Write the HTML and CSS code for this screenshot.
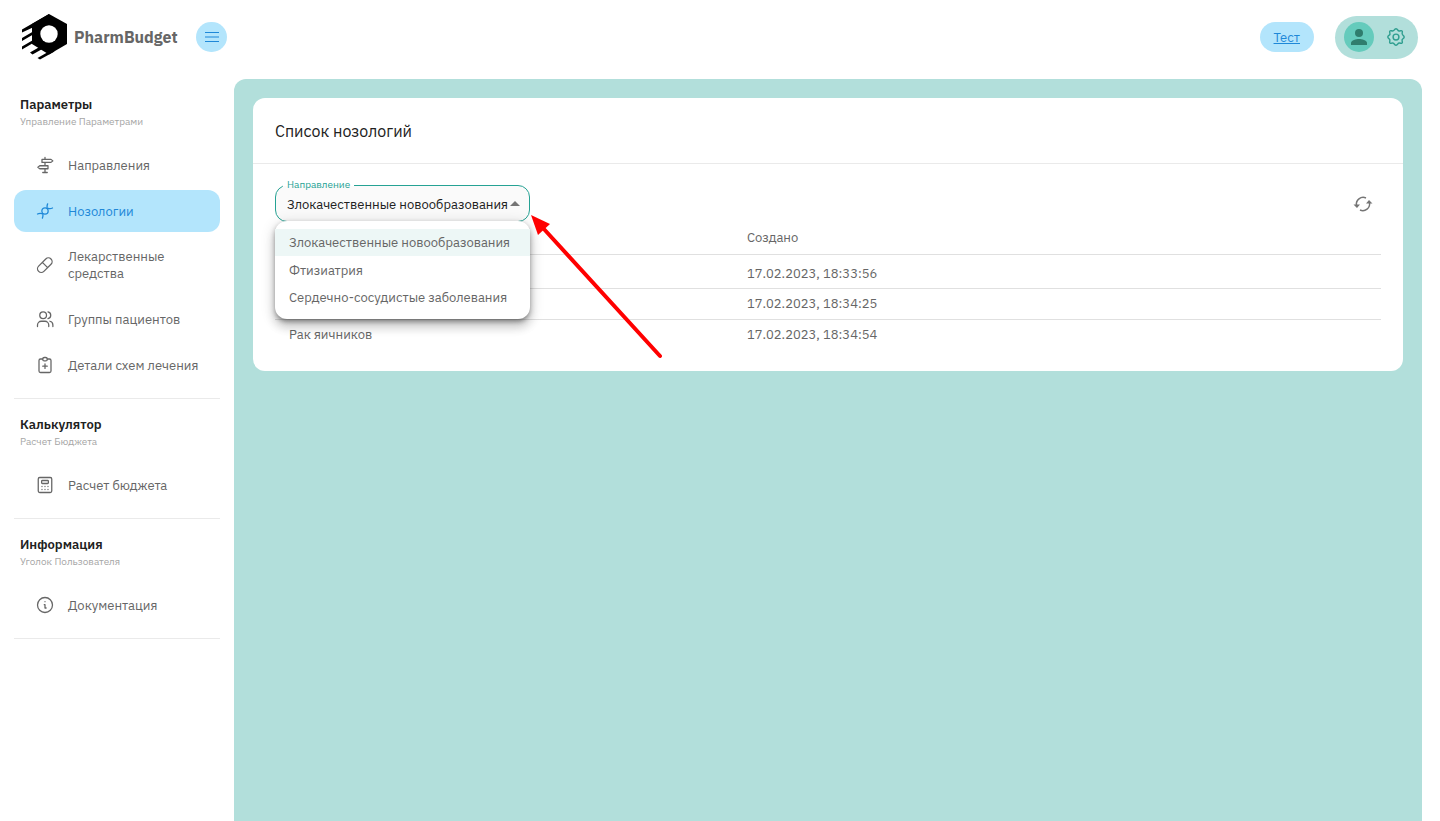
FILE: index.html
```html
<!DOCTYPE html>
<html lang="ru">
<head>
<meta charset="utf-8">
<title>PharmBudget</title>
<link rel="stylesheet" href="styles.css">
</head>
<body>
<header class="topbar">
  <div class="brand">
    <svg class="logo" viewBox="0 0 46 46" aria-hidden="true">
      <path d="M27 0 45 10v20L27 40.500 10 30V10z"/>
      <path d="M0 15.500 27 0v6L0 18.500zM0 24l12-7v3L0 27zM0 32.500l12-7v3L0 35.500zM8 38.500l12-7 3 2-12.500 7zM15.500 44l14-8 3 1.500L18 45.500z"/>
      <circle cx="27" cy="20" r="8.700" fill="#fff"/>
    </svg>
    <span class="brand-name">PharmBudget</span>
  </div>
  <button class="menu-button" type="button" aria-label="Меню">
    <svg width="16" height="16" viewBox="0 0 16 16"><path d="M1 3.500h14M1 8h14M1 12.500h14"/></svg>
  </button>
  <div class="top-actions">
    <a class="test-link" href="#">Тест</a>
    <div class="account">
      <button class="avatar" type="button" aria-label="Профиль">
        <svg width="16" height="16" viewBox="0 0 16 16"><circle cx="8" cy="4" r="4"/><path d="M0 16v-2c0-2.700 5.300-4 8-4s8 1.300 8 4v2z"/></svg>
      </button>
      <button class="settings" type="button" aria-label="Настройки">
        <svg width="20" height="20" viewBox="0 0 24 24"><path d="M10 3.500c1-2 3-2 4 0s2 1.500 3.500 1 2.500.500 2 2-.500 2.500 1 3.500 2 3 0 4-1.500 2-1 3.500-.500 2.500-2 2-2.500-.500-3.500 1-3 2-4 0-2-1.500-3.500-1-2.500-.500-2-2 .500-2.500-1-3.500-2-3 0-4 1.500-2 1-3.500.500-2.500 2-2 2.500.500 3.500-1z"/><circle cx="12" cy="12" r="3.500"/></svg>
      </button>
    </div>
  </div>
</header>

<div class="layout">
  <nav class="sidebar">
    <section class="group">
      <h2 class="group-title">Параметры</h2>
      <p class="group-note">Управление Параметрами</p>
      <ul class="links">
        <li><a class="link" href="#"><svg class="icon" viewBox="0 0 24 24"><path d="M12 2v2M12 9v4M12 17v5M9 22h6M8 4.500h12l2.500 2-2.500 2H8zM16 13H5l-2.500 2L5 17h11z"/></svg><span>Направления</span></a></li>
        <li><a class="link active" href="#" aria-current="page"><svg class="icon" viewBox="0 0 24 24"><circle cx="12" cy="12" r="4.200"/><path d="M15.500 2.500C14 6 15 9 15.500 8.500S18 10 22 8M8.500 21.500C10 18 9 15 8.500 15.500S6 14 2 16"/></svg><span>Нозологии</span></a></li>
        <li><a class="link" href="#"><svg class="icon" viewBox="0 0 24 24"><path d="m3.500 13.500 9.500-9.500a4.940 4.940 0 0 1 7 7l-9.500 9.500a4.940 4.940 0 0 1-7-7M8.500 8.500l7 7"/></svg><span>Лекарственные средства</span></a></li>
        <li><a class="link" href="#"><svg class="icon" viewBox="0 0 24 24"><circle cx="9.500" cy="7" r="4.500"/><path d="M2 22v-2a5 5 0 0 1 5-5h5a5 5 0 0 1 5 5v2M16 2.500a4.600 4.600 0 0 1 0 9M18.500 15a5 5 0 0 1 4 5v2"/></svg><span>Группы пациентов</span></a></li>
        <li><a class="link" href="#"><svg class="icon" viewBox="0 0 24 24"><path d="M9 4H6a2 2 0 0 0-2 2v14a2 2 0 0 0 2 2h12a2 2 0 0 0 2-2V6a2 2 0 0 0-2-2h-3M12 10.500v6M9 13.500h6"/><rect x="9" y="2" width="6" height="4.500" rx="2"/></svg><span>Детали схем лечения</span></a></li>
      </ul>
    </section>
    <section class="group">
      <h2 class="group-title">Калькулятор</h2>
      <p class="group-note">Расчет Бюджета</p>
      <ul class="links">
        <li><a class="link" href="#"><svg class="icon" viewBox="0 0 24 24"><rect x="3" y="2" width="18" height="20" rx="2"/><rect x="7.500" y="6" width="9" height="4" rx="1"/><path d="M8 14v.010M12 14v.010M16 14v.010M8 18v.010M12 18v.010M16 18v.010"/></svg><span>Расчет бюджета</span></a></li>
      </ul>
    </section>
    <section class="group">
      <h2 class="group-title">Информация</h2>
      <p class="group-note">Уголок Пользователя</p>
      <ul class="links">
        <li><a class="link" href="#"><svg class="icon" viewBox="0 0 24 24"><circle cx="12" cy="12" r="10"/><path d="M12 7.500v.010M11 11.500h1v4.500h1.500"/></svg><span>Документация</span></a></li>
      </ul>
    </section>
  </nav>

  <main class="content">
    <article class="card">
      <h1 class="card-title">Список нозологий</h1>
      <div class="card-body">
        <div class="toolbar">
          <div class="field">
            <label class="field-label" for="direction">Направление</label>
            <select class="field-select" id="direction">
              <option>Злокачественные новообразования</option>
              <option>Фтизиатрия</option>
              <option>Сердечно-сосудистые заболевания</option>
            </select>
            <svg class="field-caret" width="10" height="5" viewBox="0 0 10 5"><path d="M0 5 5 0l5 5z"/></svg>
            <ul class="options" role="listbox" aria-label="Направление">
              <li class="option selected" role="option" aria-selected="true">Злокачественные новообразования</li>
              <li class="option" role="option" aria-selected="false">Фтизиатрия</li>
              <li class="option" role="option" aria-selected="false">Сердечно-сосудистые заболевания</li>
            </ul>
            <svg class="pointer" width="132" height="144" viewBox="0 0 132 144" aria-hidden="true"><path class="pointer-line" d="M12 13 129 141"/><path class="pointer-head" d="M0 0 19 9 7 20z"/></svg>
          </div>
          <button class="refresh" type="button" aria-label="Обновить">
            <svg width="20" height="20" viewBox="0 0 20 20"><path d="M13 4A6.800 6.800 0 0 0 3.500 11.500M7 16A6.800 6.800 0 0 0 16.500 8.500"/><path class="tip" d="M.500 10.500h6.500L4 14zM13 9.500h6.500L16 6z"/></svg>
          </button>
        </div>
        <table class="table">
          <thead><tr><th></th><th>Создано</th></tr></thead>
          <tbody>
            <tr><td></td><td>17.02.2023, 18:33:56</td></tr>
            <tr><td></td><td>17.02.2023, 18:34:25</td></tr>
            <tr><td>Рак яичников</td><td>17.02.2023, 18:34:54</td></tr>
          </tbody>
        </table>
      </div>
    </article>
  </main>
</div>
</body>
</html>
```

FILE: styles.css
```css
* { box-sizing: border-box; }
body {
  margin: 0;
  min-height: 100vh;
  display: flex;
  flex-direction: column;
  font: 13px/17px "IBM Plex Sans", "Noto Sans", sans-serif;
  color: #666;
  background: #fff;
}
ul { list-style: none; margin: 0; padding: 0; }
button { border: 0; padding: 0; display: grid; place-items: center; background: none; cursor: pointer; }
svg { display: block; }

.topbar { display: flex; align-items: center; height: 79px; padding: 0 22px 5px; }
.brand { display: flex; align-items: center; gap: 6px; width: 174px; }
.logo { width: 46px; height: 46px; flex: none; }
.brand-name { font-size: 16px; line-height: 24px; font-weight: 700; }
.menu-button { width: 31px; height: 30px; border-radius: 15px; background: #b3e5fc; }
.menu-button svg { fill: none; stroke: #1e88d8; stroke-width: 1.2; }
.top-actions { display: flex; align-items: center; gap: 21px; margin-left: auto; }
.test-link { padding: 7px 14px 5px; line-height: 18px; border-radius: 15px; background: #b3e5fc; color: #1e88d8; }
.account { display: flex; align-items: center; gap: 12px; height: 43px; padding: 0 12px 0 9px; border-radius: 22px; background: #b2dfdb; }
.avatar { width: 30px; height: 30px; border-radius: 50%; background: #65cbbc; }
.avatar svg { fill: #2f7d6d; }
.settings { width: 20px; height: 20px; }
.settings svg { fill: none; stroke: #2e9e8f; stroke-width: 1.7; }

.layout { display: flex; flex: 1; gap: 14px; padding: 0 18px 0 14px; }
.sidebar { width: 206px; flex: none; }
.group { padding: 17px 0 12px; border-bottom: 1px solid #eaeaea; }
.group-title { margin: 0 6px; font-size: 13px; line-height: 17px; font-weight: 600; color: #212121; }
.group-note { margin: 0 6px 14px; font-size: 10px; line-height: 17px; color: #a6a6a6; }
.links { display: flex; flex-direction: column; gap: 4px; }
.link { display: flex; align-items: center; gap: 14px; min-height: 42px; padding: 12px 12px 12px 22px; border-radius: 12px; color: inherit; text-decoration: none; }
.link span { flex: 1; }
.active { background: #b3e5fc; color: #1e88d8; }
.icon { width: 18px; height: 18px; flex: none; fill: none; stroke: currentColor; stroke-width: 1.7; stroke-linecap: round; stroke-linejoin: round; }

.content { flex: 1; min-width: 0; padding: 19px; border-radius: 12px 12px 0 0; background: #b2dfdb; }
.card { border-radius: 12px; background: #fff; }
.card-title { margin: 0; padding: 23px 22px 21px; font-size: 16px; line-height: 21px; font-weight: 400; color: #212121; border-bottom: 1px solid #eaeaea; }
.card-body { padding: 21px 22px; }
.toolbar { display: flex; align-items: center; justify-content: space-between; }
.field { position: relative; width: 255px; }
.field-label { position: absolute; top: -7px; left: 8px; padding: 0 4px; font-size: 10px; line-height: 13px; color: #26a294; background: linear-gradient(#fff 60%, #fafafa 60%); }
.field-select { display: block; width: 100%; height: 37px; padding: 2px 8px 0 11px; appearance: none; border: 1px solid #26a294; border-radius: 12px; background: #fafafa; font: inherit; color: #212121; outline: 0; }
.field-caret { position: absolute; top: 16px; right: 10px; fill: #757575; }
.options { position: absolute; top: 36px; left: 0; z-index: 1; width: 100%; padding: 8px 0; border-radius: 12px; background: #fff; box-shadow: 0 5px 5px -3px #0003, 0 8px 10px 1px #00000024, 0 3px 14px 2px #0000001f, 0 2px 5px #0004; }
.option { padding: 5px 14px; white-space: nowrap; }
.selected { margin-bottom: 1px; background: #edf7f6; }
.pointer { position: absolute; top: 30px; left: 256px; z-index: 2; }
.pointer-line { fill: none; stroke: #f00; stroke-width: 4; stroke-linecap: round; }
.pointer-head { fill: #f00; }
.refresh { width: 36px; height: 36px; }
.refresh svg { fill: none; stroke: #757575; stroke-width: 1.5; }
.refresh .tip { fill: #757575; stroke: none; }

.table { width: 100%; table-layout: fixed; border-collapse: collapse; }
.table th, .table td { padding: 6px 14px 7px; text-align: left; font-weight: 400; border-bottom: 1px solid #e0e0e0; }
.table th { padding: 7px 14px 8px; }
.table th:first-child { width: 41.4%; }
.table tbody tr:first-child td { padding: 10px 14px 6px; }
.table tbody tr:last-child td { border-bottom: 0; }
```
